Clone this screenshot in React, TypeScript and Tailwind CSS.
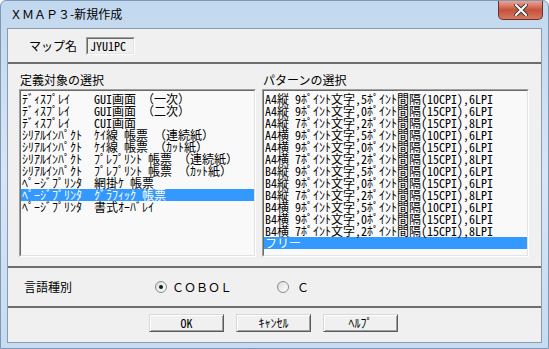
import React from "react";

const mono = {
  fontFamily: '"Noto Sans Mono CJK JP", "Noto Sans CJK JP", "DejaVu Sans Mono", monospace',
};
const ui = {
  fontFamily: '"Noto Sans CJK JP", "Noto Sans", sans-serif',
};

const leftItems = [
  "ﾃﾞｨｽﾌﾟﾚｲ    GUI画面 （一次）",
  "ﾃﾞｨｽﾌﾟﾚｲ    GUI画面 （二次）",
  "ﾃﾞｨｽﾌﾟﾚｲ    CUI画面",
  "ｼﾘｱﾙｲﾝﾊﾟｸﾄ  ｹｲ線 帳票 （連続紙）",
  "ｼﾘｱﾙｲﾝﾊﾟｸﾄ  ｹｲ線 帳票 （ｶｯﾄ紙）",
  "ｼﾘｱﾙｲﾝﾊﾟｸﾄ  ﾌﾟﾚﾌﾟﾘﾝﾄ 帳票 （連続紙）",
  "ｼﾘｱﾙｲﾝﾊﾟｸﾄ  ﾌﾟﾚﾌﾟﾘﾝﾄ 帳票 （ｶｯﾄ紙）",
  "ﾍﾟｰｼﾞﾌﾟﾘﾝﾀ  網掛ｹ 帳票",
  "ﾍﾟｰｼﾞﾌﾟﾘﾝﾀ  ｸﾞﾗﾌｨｯｸ 帳票",
  "ﾍﾟｰｼﾞﾌﾟﾘﾝﾀ  書式ｵｰﾊﾞﾚｲ",
];

const rightItems = [
  "A4縦 9ﾎﾟｲﾝﾄ文字,5ﾎﾟｲﾝﾄ間隔(10CPI),6LPI",
  "A4縦 9ﾎﾟｲﾝﾄ文字,0ﾎﾟｲﾝﾄ間隔(15CPI),6LPI",
  "A4縦 7ﾎﾟｲﾝﾄ文字,2ﾎﾟｲﾝﾄ間隔(15CPI),8LPI",
  "A4横 9ﾎﾟｲﾝﾄ文字,5ﾎﾟｲﾝﾄ間隔(10CPI),6LPI",
  "A4横 9ﾎﾟｲﾝﾄ文字,0ﾎﾟｲﾝﾄ間隔(15CPI),6LPI",
  "A4横 7ﾎﾟｲﾝﾄ文字,2ﾎﾟｲﾝﾄ間隔(15CPI),8LPI",
  "B4縦 9ﾎﾟｲﾝﾄ文字,5ﾎﾟｲﾝﾄ間隔(10CPI),6LPI",
  "B4縦 9ﾎﾟｲﾝﾄ文字,0ﾎﾟｲﾝﾄ間隔(15CPI),6LPI",
  "B4縦 7ﾎﾟｲﾝﾄ文字,2ﾎﾟｲﾝﾄ間隔(15CPI),8LPI",
  "B4横 9ﾎﾟｲﾝﾄ文字,5ﾎﾟｲﾝﾄ間隔(10CPI),6LPI",
  "B4横 9ﾎﾟｲﾝﾄ文字,0ﾎﾟｲﾝﾄ間隔(15CPI),6LPI",
  "B4横 7ﾎﾟｲﾝﾄ文字,2ﾎﾟｲﾝﾄ間隔(15CPI),8LPI",
  "フリー",
];

function ListBox({ items, selected, width }: { items: string[]; selected: number; width: string }) {
  return (
    <div
      className={`${width} h-[168px] border-t-[#a0a0a0] border-l-[#a0a0a0] border-b-white border-r-white border`}
    >
      <div className="h-full border border-t-[#696969] border-l-[#696969] border-b-[#e3e3e3] border-r-[#e3e3e3] bg-[#f9f9f9] pt-[2px]">
        {items.map((t, i) => (
          <div
            key={i}
            className={`h-[12px] leading-[12px] text-[12px] pl-[1px] whitespace-pre ${
              i === selected ? "bg-[#3399ff] text-white" : "text-black"
            }`}
            style={mono}
          >
            {t}
          </div>
        ))}
      </div>
    </div>
  );
}

function Btn({ label }: { label: string }) {
  return (
    <div className="w-[75px] h-[18px] border border-t-[#d8d8d8] border-l-[#d8d8d8] border-b-[#5a5a5a] border-r-[#5a5a5a] bg-[#f0f0f0] flex items-center justify-center text-[12px] leading-[12px] text-black shadow-[inset_1px_1px_0_#ffffff,inset_-1px_-1px_0_#a0a0a0]" style={mono}>
      {label}
    </div>
  );
}

function Radio({ checked }: { checked: boolean }) {
  return (
    <div className="w-[12px] h-[12px] rounded-full border border-[#8a8a8a] bg-gradient-to-br from-[#dcdcdc] to-[#ffffff] flex items-center justify-center">
      {checked && <div className="w-[4px] h-[4px] rounded-full bg-[#1a1a1a]" />}
    </div>
  );
}

const Sep = () => <div className="h-[2px] bg-[#6d6d6d]" />;

export default function App() {
  return (
    <div className="w-[549px] h-[349px] flex flex-col bg-gradient-to-b from-[#c2d8ee] via-[#d6e6f6] to-[#c6dcf1] border border-[#7d97b4] rounded-t-[6px] overflow-hidden">
      <div className="h-[27px] flex items-start justify-between">
        <div className="pl-[9px] pt-[5px] text-[12px] leading-[16px] text-black" style={ui}>
          ＸＭＡＰ３-新規作成
        </div>
        <div className="mr-[5px] w-[45px] h-[19px] rounded-b-[5px] border border-t-0 border-[#6b2d2d] bg-gradient-to-b from-[#e8a595] via-[#c7503c] to-[#d47a5e] flex items-center justify-center">
          <svg width="14" height="12" viewBox="0 0 14 12">
            <path d="M2 1 L12 11 M12 1 L2 11" stroke="#3b3b3b" strokeWidth="4" strokeLinecap="square" />
            <path d="M2 1 L12 11 M12 1 L2 11" stroke="#ffffff" strokeWidth="2" strokeLinecap="square" />
          </svg>
        </div>
      </div>
      <div className="flex-1 px-[6px] pb-[5px] flex">
        <div className="flex-1 flex flex-col border border-[#8a9bb0] bg-[#f0f0f0]">
          <div className="h-[33px] flex items-center pl-[21px]">
            <div className="w-[57px] text-[12px] leading-[14px] text-black" style={ui}>
              マップ名
            </div>
            <div className="w-[49px] h-[18px] border border-t-[#a0a0a0] border-l-[#a0a0a0] border-b-white border-r-white">
              <div className="h-full border border-t-[#696969] border-l-[#696969] border-b-[#e3e3e3] border-r-[#e3e3e3] bg-[#f0f0f0] text-[12px] leading-[14px] pl-[2px] text-black" style={mono}>
                JYU1PC
              </div>
            </div>
          </div>
          <Sep />
          <div className="h-[202px] flex pl-[11px] pt-[8px] gap-[6px]">
            <div className="flex flex-col gap-[1px]">
              <div className="h-[16px] text-[12px] leading-[16px] text-black pl-[1px]" style={ui}>
                定義対象の選択
              </div>
              <ListBox items={leftItems} selected={8} width="w-[237px]" />
            </div>
            <div className="flex flex-col gap-[1px]">
              <div className="h-[16px] text-[12px] leading-[16px] text-black pl-[1px]" style={ui}>
                パターンの選択
              </div>
              <ListBox items={rightItems} selected={12} width="w-[267px]" />
            </div>
          </div>
          <Sep />
          <div className="h-[38px] flex items-center pl-[16px]">
            <div className="w-[131px] text-[12px] leading-[14px] text-black" style={ui}>
              言語種別
            </div>
            <Radio checked />
            <div className="ml-[5px] w-[105px] text-[12px] leading-[14px] text-black" style={ui}>
              ＣＯＢＯＬ
            </div>
            <Radio checked={false} />
            <div className="ml-[8px] text-[12px] leading-[14px] text-black" style={ui}>
              Ｃ
            </div>
          </div>
          <Sep />
          <div className="flex-1 flex pl-[141px] pt-[6px] gap-[12px]">
            <Btn label="OK" />
            <Btn label="ｷｬﾝｾﾙ" />
            <Btn label="ﾍﾙﾌﾟ" />
          </div>
        </div>
      </div>
    </div>
  );
}
